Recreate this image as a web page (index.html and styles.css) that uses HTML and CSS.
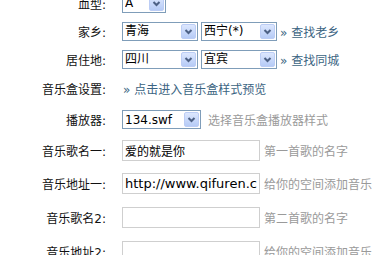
FILE: index.html
```html
<!DOCTYPE html>
<html lang="zh-CN">
<head>
  <meta charset="UTF-8" />
  <title>个人资料设置</title>
  <link rel="stylesheet" href="styles.css">
</head>
<body>
  <form class="profile">
    <div class="row row-sel">
      <label class="lbl">血型:</label>
      <div class="field">
        <span class="combo combo-s">
          <select name="blood"><option>A</option></select>
          <span class="btn"><svg width="13" height="13" viewBox="0 0 13 13"><polyline points="3.5,5 6.5,8 9.5,5" /></svg></span>
        </span>
      </div>
    </div>

    <div class="row row-sel">
      <label class="lbl">家乡:</label>
      <div class="field">
        <span class="combo">
          <select name="home_prov"><option>青海</option></select>
          <span class="btn"><svg width="13" height="13" viewBox="0 0 13 13"><polyline points="3.5,5 6.5,8 9.5,5" /></svg></span>
        </span>
        <span class="combo">
          <select name="home_city"><option>西宁(*)</option></select>
          <span class="btn"><svg width="13" height="13" viewBox="0 0 13 13"><polyline points="3.5,5 6.5,8 9.5,5" /></svg></span>
        </span>
        <a class="link" href="#">» 查找老乡</a>
      </div>
    </div>

    <div class="row row-sel">
      <label class="lbl">居住地:</label>
      <div class="field">
        <span class="combo">
          <select name="live_prov"><option>四川</option></select>
          <span class="btn"><svg width="13" height="13" viewBox="0 0 13 13"><polyline points="3.5,5 6.5,8 9.5,5" /></svg></span>
        </span>
        <span class="combo">
          <select name="live_city"><option>宜宾</option></select>
          <span class="btn"><svg width="13" height="13" viewBox="0 0 13 13"><polyline points="3.5,5 6.5,8 9.5,5" /></svg></span>
        </span>
        <a class="link" href="#">» 查找同城</a>
      </div>
    </div>

    <div class="row row-mid">
      <label class="lbl">音乐盒设置:</label>
      <div class="field">
        <a class="link link-first" href="#">» 点击进入音乐盒样式预览</a>
      </div>
    </div>

    <div class="row row-mid">
      <label class="lbl">播放器:</label>
      <div class="field">
        <span class="combo combo-m">
          <select name="player"><option>134.swf</option></select>
          <span class="btn"><svg width="13" height="13" viewBox="0 0 13 13"><polyline points="3.5,5 6.5,8 9.5,5" /></svg></span>
        </span>
        <span class="hint">选择音乐盒播放器样式</span>
      </div>
    </div>

    <div class="row row-mid">
      <label class="lbl">音乐歌名一:</label>
      <div class="field">
        <input class="text" type="text" name="song1" value="爱的就是你" />
        <span class="hint">第一首歌的名字</span>
      </div>
    </div>

    <div class="row row-txt">
      <label class="lbl">音乐地址一:</label>
      <div class="field">
        <input class="text text-url" type="text" name="url1" value="http://www.qifuren.cn/music/1.mp3" />
        <span class="hint">给你的空间添加音乐</span>
      </div>
    </div>

    <div class="row row-txt">
      <label class="lbl">音乐歌名2:</label>
      <div class="field">
        <input class="text" type="text" name="song2" value="" />
        <span class="hint">第二首歌的名字</span>
      </div>
    </div>

    <div class="row row-txt">
      <label class="lbl">音乐地址2:</label>
      <div class="field">
        <input class="text text-url" type="text" name="url2" value="" />
        <span class="hint">给你的空间添加音乐</span>
      </div>
    </div>
  </form>
</body>
</html>
```

FILE: styles.css
```css
* {
  box-sizing: border-box;
}

body {
  margin: 0;
  background: #fff;
  color: #111;
  font: 12px "DejaVu Sans", "Noto Sans CJK SC", sans-serif;
  overflow: hidden;
}

/* page is scrolled a little, first row is cut off */
.profile {
  margin-top: -11px;
}

.row {
  display: grid;
  grid-template-columns: 106px 1fr;
  column-gap: 16px;
  align-items: center;
}

.row-sel { height: 28px; }
.row-mid { height: 31px; }
.row-txt { height: 34px; }

.lbl {
  text-align: right;
  white-space: nowrap;
}

.field {
  display: flex;
  align-items: center;
  white-space: nowrap;
}

/* xp style combo box */
.combo {
  position: relative;
  display: inline-block;
  width: 76px;
  height: 19px;
  margin-right: 3px;
  border: 1px solid #7f9db9;
  background: #fff;
}

.combo-s { width: 44px; }
.combo-m { width: 79px; }

.combo select {
  appearance: none;
  -webkit-appearance: none;
  width: 100%;
  height: 100%;
  margin: 0;
  padding: 0 0 0 2px;
  border: 0;
  background: transparent;
  color: #000;
  font: 12px "DejaVu Sans", "Noto Sans CJK SC", sans-serif;
  outline: none;
}

.combo .btn {
  position: absolute;
  top: 1px;
  right: 1px;
  width: 15px;
  height: 15px;
  border: 1px solid #bccdf5;
  border-radius: 2px;
  background: linear-gradient(#dce7fe, #b6cbf6);
  display: flex;
  align-items: center;
  justify-content: center;
  pointer-events: none;
}

.combo .btn polyline {
  fill: none;
  stroke: #4d6185;
  stroke-width: 2;
}

.link {
  color: #3b6482;
  text-decoration: none;
}

.link-first {
  margin-left: 1px;
}

.hint {
  margin-left: 4px;
  color: #9a9a9a;
}

.text {
  width: 138px;
  height: 21px;
  margin: 0;
  padding: 0 2px;
  border: 1px solid #cfcfcf;
  background: #fff;
  color: #000;
  font: 12px "DejaVu Sans", "Noto Sans CJK SC", sans-serif;
  outline: none;
}

.text-url {
  font-size: 13px;
}
```
